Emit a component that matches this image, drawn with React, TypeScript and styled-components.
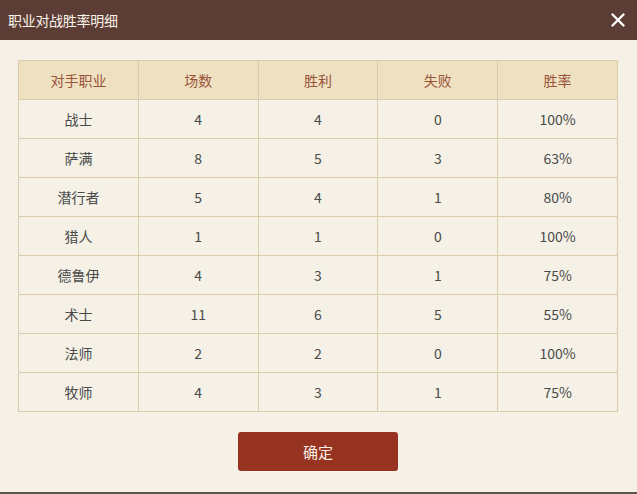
import React from "react";
import styled, { createGlobalStyle } from "styled-components";

const GlobalStyle = createGlobalStyle`
  html, body {
    margin: 0;
    padding: 0;
    background: #f5f1e6;
  }
  body {
    font-family: "Noto Sans CJK SC", "Noto Sans", sans-serif;
  }
`;

const Dialog = styled.section`
  width: 637px;
  height: 494px;
  display: flex;
  flex-direction: column;
  background: #f5f1e6;
  border-bottom: 2px solid #5a5650;
  box-sizing: border-box;
`;

const Header = styled.header`
  height: 40px;
  flex: none;
  display: flex;
  align-items: center;
  justify-content: space-between;
  padding: 0 8px 0 8px;
  background: #5c3d35;
  color: #fbf3ea;
  h1 {
    margin: 0;
    font-size: 14px;
    font-weight: 400;
    letter-spacing: -0.3px;
  }
`;

const CloseButton = styled.button`
  border: 0;
  background: none;
  padding: 0;
  width: 22px;
  height: 22px;
  display: flex;
  align-items: center;
  justify-content: center;
  cursor: pointer;
`;

const Body = styled.div`
  flex: 1;
  display: flex;
  flex-direction: column;
  align-items: flex-start;
  padding: 20px 0 0 18px;
`;

const Table = styled.table`
  width: 600px;
  border-collapse: collapse;
  table-layout: fixed;
  font-size: 14px;
  th,
  td {
    height: 37px;
    padding: 0 0 1px 0;
    text-align: center;
    border: 1px solid #dccbaa;
  }
  th {
    background: #eee1c2;
    color: #9a5238;
    font-weight: 400;
  }
  td {
    color: #4a4a4a;
  }
`;

const ConfirmButton = styled.button`
  margin: 20px 0 0 220px;
  width: 160px;
  height: 39px;
  border: 0;
  border-radius: 3px;
  background: #973421;
  color: #fbeee4;
  font-family: inherit;
  font-size: 15px;
  cursor: pointer;
`;

const rows = [
  ["战士", 4, 4, 0, "100%"],
  ["萨满", 8, 5, 3, "63%"],
  ["潜行者", 5, 4, 1, "80%"],
  ["猎人", 1, 1, 0, "100%"],
  ["德鲁伊", 4, 3, 1, "75%"],
  ["术士", 11, 6, 5, "55%"],
  ["法师", 2, 2, 0, "100%"],
  ["牧师", 4, 3, 1, "75%"],
];

export default function App() {
  return (
    <>
      <GlobalStyle />
      <Dialog>
        <Header>
          <h1>职业对战胜率明细</h1>
          <CloseButton aria-label="close">
            <svg width="14" height="14" viewBox="0 0 14 14">
              <path d="M1.5 1.5 L12.5 12.5 M12.5 1.5 L1.5 12.5" stroke="#ffffff" strokeWidth="2.4" strokeLinecap="round" />
            </svg>
          </CloseButton>
        </Header>
        <Body>
          <Table>
            <thead>
              <tr>
                <th>对手职业</th>
                <th>场数</th>
                <th>胜利</th>
                <th>失败</th>
                <th>胜率</th>
              </tr>
            </thead>
            <tbody>
              {rows.map((r) => (
                <tr key={r[0]}>
                  {r.map((c, i) => (
                    <td key={i}>{c}</td>
                  ))}
                </tr>
              ))}
            </tbody>
          </Table>
          <ConfirmButton>确定</ConfirmButton>
        </Body>
      </Dialog>
    </>
  );
}
